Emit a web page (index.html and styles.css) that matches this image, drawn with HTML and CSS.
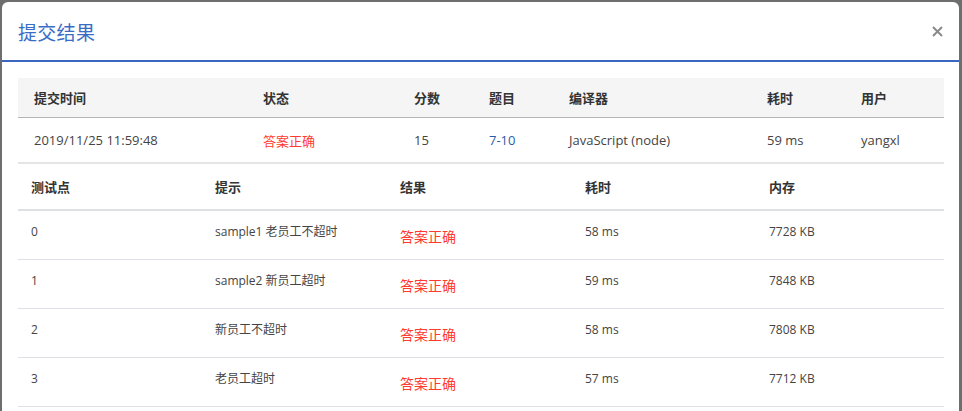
FILE: index.html
```html
<!DOCTYPE html>
<html lang="zh-CN">
<head>
<meta charset="utf-8">
<title>提交结果</title>
<link rel="stylesheet" href="styles.css">
</head>
<body>
<div class="modal">
  <div class="modal-header">
    <h2 class="modal-title">提交结果</h2>
    <button class="close" aria-label="关闭">
      <svg width="11" height="11" viewBox="0 0 11 11"><path d="M1 1L10 10M10 1L1 10" stroke="#8a8a8a" stroke-width="2" fill="none"/></svg>
    </button>
  </div>
  <div class="modal-body">
    <table class="summary">
      <colgroup>
        <col class="s1"><col class="s2"><col class="s3"><col class="s4"><col class="s5"><col class="s6"><col class="s7">
      </colgroup>
      <thead>
        <tr><th>提交时间</th><th>状态</th><th>分数</th><th>题目</th><th>编译器</th><th>耗时</th><th>用户</th></tr>
      </thead>
      <tbody>
        <tr><td>2019/11/25 11:59:48</td><td class="ok">答案正确</td><td>15</td><td><a class="link" href="#">7-10</a></td><td>JavaScript (node)</td><td>59 ms</td><td>yangxl</td></tr>
      </tbody>
    </table>
    <table class="cases">
      <colgroup>
        <col class="c1"><col class="c2"><col class="c3"><col class="c4"><col class="c5">
      </colgroup>
      <thead>
        <tr><th>测试点</th><th>提示</th><th>结果</th><th>耗时</th><th>内存</th></tr>
      </thead>
      <tbody>
        <tr><td>0</td><td>sample1 老员工不超时</td><td><span class="ok-big">答案正确</span></td><td>58 ms</td><td>7728 KB</td></tr>
        <tr><td>1</td><td>sample2 新员工超时</td><td><span class="ok-big">答案正确</span></td><td>59 ms</td><td>7848 KB</td></tr>
        <tr><td>2</td><td>新员工不超时</td><td><span class="ok-big">答案正确</span></td><td>58 ms</td><td>7808 KB</td></tr>
        <tr><td>3</td><td>老员工超时</td><td><span class="ok-big">答案正确</span></td><td>57 ms</td><td>7712 KB</td></tr>
      </tbody>
    </table>
  </div>
</div>
</body>
</html>
```
FILE: styles.css
```css
html, body {
  margin: 0;
  padding: 0;
  height: 100%;
  overflow: hidden;
}
body {
  background: #6e6e6e;
  font-family: "Open Sans", "Noto Sans CJK SC", sans-serif;
  color: #333;
  padding: 2px 3px 0 2px;
  box-sizing: border-box;
}
.modal {
  background: #fff;
  border-radius: 6px 6px 0 0;
  height: 100%;
}
.modal-header {
  height: 58px;
  border-bottom: 2px solid #3a66c2;
  display: flex;
  align-items: center;
  justify-content: space-between;
  padding: 0 16px;
}
.modal-title {
  margin: 0;
  font-family: "Noto Sans CJK SC", sans-serif;
  font-weight: 400;
  font-size: 19px;
  color: #3a6cc6;
  letter-spacing: 0.3px;
}
.close {
  border: 0;
  background: none;
  padding: 0;
  display: flex;
  cursor: pointer;
}
.modal-body {
  padding: 16px 14px 0 16px;
}
table {
  width: 926px;
  border-collapse: collapse;
  table-layout: fixed;
}
.summary {
  font-size: 13px;
}
.summary th {
  background: #f5f5f5;
  height: 39px;
  text-align: left;
  font-weight: 700;
  font-family: "Noto Sans CJK SC", sans-serif;
  padding: 0 16px;
  border-bottom: 1px solid #b5b5b5;
  color: #333;
}
.summary td {
  height: 44px;
  padding: 0 16px;
  border-bottom: 2px solid #e5e5e5;
  color: #444;
}
.s1 { width: 229px; }
.s2 { width: 151px; }
.s3 { width: 75px; }
.s4 { width: 80px; }
.s5 { width: 198px; }
.s6 { width: 94px; }
.s7 { width: 99px; }
.summary td.ok {
  color: #ff3b30;
  font-family: "Noto Sans CJK SC", sans-serif;
}
.link {
  color: #2b5ca8;
  text-decoration: none;
}
.cases {
  font-size: 12px;
}
.cases th {
  height: 45px;
  text-align: left;
  font-weight: 700;
  font-family: "Noto Sans CJK SC", sans-serif;
  font-size: 13px;
  padding: 0 13px;
  border-bottom: 2px solid #dde0e4;
  color: #333;
}
.cases td {
  height: 49px;
  padding: 11px 13px 0;
  box-sizing: border-box;
  vertical-align: top;
  border-bottom: 1px solid #dde0e4;
  color: #444;
  line-height: 20px;
}
.c1 { width: 184px; }
.c2 { width: 185px; }
.c3 { width: 185px; }
.c4 { width: 184px; }
.c5 { width: 188px; }
.ok-big {
  display: block;
  margin-top: 4px;
  font-size: 14px;
  color: #ff3b30;
  font-family: "Noto Sans CJK SC", sans-serif;
}
```
